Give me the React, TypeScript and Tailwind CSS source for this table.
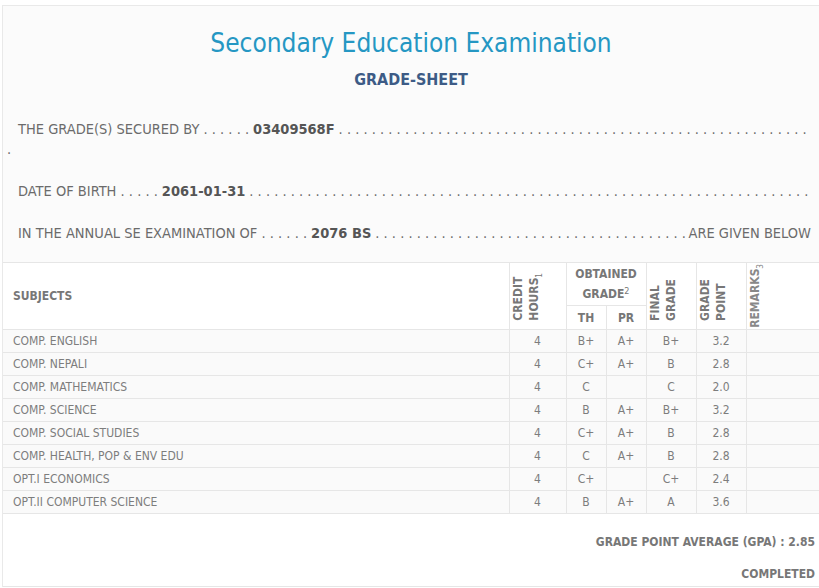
import React from "react";

const rows = [
  { subject: "COMP. ENGLISH", credit: 4, th: "B+", pr: "A+", final: "B+", gp: "3.2" },
  { subject: "COMP. NEPALI", credit: 4, th: "C+", pr: "A+", final: "B", gp: "2.8" },
  { subject: "COMP. MATHEMATICS", credit: 4, th: "C", pr: "", final: "C", gp: "2.0" },
  { subject: "COMP. SCIENCE", credit: 4, th: "B", pr: "A+", final: "B+", gp: "3.2" },
  { subject: "COMP. SOCIAL STUDIES", credit: 4, th: "C+", pr: "A+", final: "B", gp: "2.8" },
  { subject: "COMP. HEALTH, POP & ENV EDU", credit: 4, th: "C", pr: "A+", final: "B", gp: "2.8" },
  { subject: "OPT.I ECONOMICS", credit: 4, th: "C+", pr: "", final: "C+", gp: "2.4" },
  { subject: "OPT.II COMPUTER SCIENCE", credit: 4, th: "B", pr: "A+", final: "A", gp: "3.6" },
];

const dots = ". ".repeat(120);

function Leader() {
  return (
    <span className="min-w-0 flex-1 overflow-hidden whitespace-nowrap pl-1 pr-[2px]">
      {dots}
    </span>
  );
}

function VText({ children }: { children: React.ReactNode }) {
  return (
    <div className="mx-auto rotate-180 text-left leading-[16px] [writing-mode:vertical-rl]">
      {children}
    </div>
  );
}

function VSup({ n }: { n: string }) {
  return <span className="relative left-[-6px] text-[8px] font-normal">{n}</span>;
}

export default function App() {
  return (
    <div className="h-[588px] w-[819px] overflow-hidden bg-white pl-[2px] pt-[5px] font-['Liberation_Sans_Narrow','DejaVu_Sans_Condensed','Liberation_Sans',sans-serif]">
      <div className="border-l border-t border-[#e9e9e9] bg-[#fbfbfb]">
        <div className="flex flex-col items-center pt-[19px]">
          <h1 className="text-[26px] leading-[36px] text-[#2597c3]">
            Secondary Education Examination
          </h1>
          <h2 className="mt-[9px] text-[16px] font-bold leading-[20px] text-[#3d5b86]">
            GRADE-SHEET
          </h2>
        </div>

        <div className="mt-[29px] text-[14.5px] text-[#6b6b6b]">
          <div className="flex items-center pl-[15px] pr-[8px] leading-[20px]">
            <span className="whitespace-nowrap">THE GRADE(S) SECURED BY . . . . . .</span>
            <b className="ml-1 text-[#555]">03409568F</b>
            <Leader />
          </div>
          <div className="pl-[4px] leading-[20px]">.</div>
          <div className="mt-[22px] flex items-center pl-[15px] pr-[8px] leading-[20px]">
            <span className="whitespace-nowrap">DATE OF BIRTH . . . . .</span>
            <b className="ml-1 text-[#555]">2061-01-31</b>
            <Leader />
          </div>
          <div className="mt-[22px] flex items-center pl-[15px] pr-[8px] leading-[20px]">
            <span className="whitespace-nowrap">IN THE ANNUAL SE EXAMINATION OF . . . . . .</span>
            <b className="ml-1 text-[#555]">2076 BS</b>
            <Leader />
            <span className="whitespace-nowrap">ARE GIVEN BELOW</span>
          </div>
        </div>

        <table className="mt-[19px] w-[817px] table-fixed border-collapse font-['DejaVu_Sans_Condensed','Liberation_Sans',sans-serif] text-[12px] text-[#7d7d7d]">
          <colgroup>
            <col className="w-[506px]" />
            <col className="w-[57px]" />
            <col className="w-[40px]" />
            <col className="w-[40px]" />
            <col className="w-[50px]" />
            <col className="w-[50px]" />
            <col />
          </colgroup>
          <thead className="bg-white font-bold text-[#777]">
            <tr className="h-[43px]">
              <th rowSpan={2} className="border border-l-0 border-[#e6e6e6] pl-[10px] text-left">
                SUBJECTS
              </th>
              <th rowSpan={2} className="border border-[#e6e6e6] pb-[8px] align-bottom">
                <VText>
                  CREDIT
                  <br />
                  HOURS<VSup n="1" />
                </VText>
              </th>
              <th colSpan={2} className="border border-[#e6e6e6] leading-[20px]">
                OBTAINED
                <br />
                GRADE<sup className="text-[9px] font-normal">2</sup>
              </th>
              <th rowSpan={2} className="border border-[#e6e6e6] pb-[8px] align-bottom">
                <VText>
                  FINAL
                  <br />
                  GRADE
                </VText>
              </th>
              <th rowSpan={2} className="border border-[#e6e6e6] pb-[8px] align-bottom">
                <VText>
                  GRADE
                  <br />
                  POINT
                </VText>
              </th>
              <th rowSpan={2} className="border border-r-0 border-[#e6e6e6] pb-[1px] align-bottom text-[#888]">
                <VText>
                  REMARKS<VSup n="3" />
                </VText>
              </th>
            </tr>
            <tr className="h-[24px]">
              <th className="border border-[#e6e6e6]">TH</th>
              <th className="border border-[#e6e6e6]">PR</th>
            </tr>
          </thead>
          <tbody>
            {rows.map((r, i) => (
              <tr key={i} className="h-[23px] bg-[#fafafa]">
                <td className="border border-l-0 border-[#e6e6e6] pl-[10px]">{r.subject}</td>
                <td className="border border-[#e6e6e6] text-center">{r.credit}</td>
                <td className="border border-[#e6e6e6] text-center">{r.th}</td>
                <td className="border border-[#e6e6e6] text-center">{r.pr}</td>
                <td className="border border-[#e6e6e6] text-center">{r.final}</td>
                <td className="border border-[#e6e6e6] text-center">{r.gp}</td>
                <td className="border border-r-0 border-[#e6e6e6]"></td>
              </tr>
            ))}
          </tbody>
        </table>

        <div className="flex flex-col items-end border-b border-[#e6e6e6] bg-white pb-[4px] pr-[4px] pt-[20px] font-['DejaVu_Sans_Condensed','Liberation_Sans',sans-serif] text-[12px] font-bold leading-[16px] text-[#777]">
          <div>GRADE POINT AVERAGE (GPA) : 2.85</div>
          <div className="mt-[16px]">COMPLETED</div>
        </div>
      </div>
    </div>
  );
}
